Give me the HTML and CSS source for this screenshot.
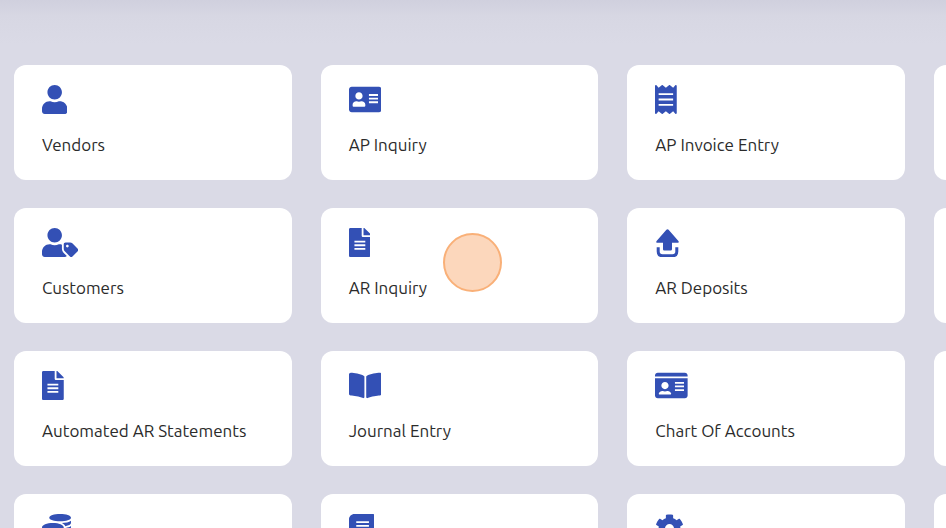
FILE: index.html
```html
<!DOCTYPE html>
<html lang="en">
<head>
    <meta charset="UTF-8">
    <meta name="viewport" content="width=device-width, initial-scale=1.0">
    <title>Accounting</title>
    <link rel="stylesheet" href="styles.css">
</head>
<body>
    <main class="dashboard">
        <div class="card-grid">
            <!-- Payables -->
            <a class="card" href="#vendors">
                <svg class="icon" viewBox="0 0 448 512" aria-hidden="true"><path d="M224 256c70.7 0 128-57.3 128-128S294.7 0 224 0 96 57.3 96 128s57.3 128 128 128zm89.6 32h-16.7c-22.2 10.2-46.9 16-72.9 16s-50.6-5.8-72.9-16h-16.7C60.2 288 0 348.2 0 422.4V464c0 26.5 21.5 48 48 48h352c26.5 0 48-21.5 48-48v-41.6c0-74.2-60.2-134.4-134.4-134.4z"/></svg>
                <span class="label">Vendors</span>
            </a>
            <a class="card" href="#ap-inquiry">
                <svg class="icon" viewBox="0 0 576 512" aria-hidden="true"><path fill-rule="evenodd" d="M528 32H48C21.5 32 0 53.5 0 80v352c0 26.5 21.5 48 48 48h480c26.5 0 48-21.5 48-48V80c0-26.5-21.5-48-48-48zm-352 96c35.3 0 64 28.7 64 64s-28.7 64-64 64-64-28.7-64-64 28.7-64 64-64zm112 236.8c0 10.6-10 19.2-22.4 19.2H86.4C74 384 64 375.4 64 364.8v-19.2c0-31.8 30.1-57.6 67.2-57.6h5c12.3 5.1 25.7 8 39.8 8s27.6-2.9 39.8-8h5c37.1 0 67.2 25.8 67.2 57.6v19.2zM352 160h160v32H352zM352 224h160v32H352zM352 288h160v32H352z"/></svg>
                <span class="label">AP Inquiry</span>
            </a>
            <a class="card" href="#ap-invoice-entry">
                <svg class="icon" viewBox="0 0 384 512" aria-hidden="true"><path fill-rule="evenodd" d="M358.4 3.2L320 48 265.6 3.2a15.9 15.9 0 0 0-19.2 0L192 48 137.6 3.2a15.9 15.9 0 0 0-19.2 0L64 48 25.6 3.2C15-4.7 0 2.8 0 16v480c0 13.2 15 20.7 25.6 12.8L64 464l54.4 44.8a15.9 15.9 0 0 0 19.2 0L192 464l54.4 44.8a15.9 15.9 0 0 0 19.2 0L320 464l38.4 44.8c10.5 7.9 25.6.4 25.6-12.8V16c0-13.2-15-20.7-25.6-12.8zM64 144h256v32H64zM64 240h256v32H64zM64 336h256v32H64z"/></svg>
                <span class="label">AP Invoice Entry</span>
            </a>
            <div class="card"></div>

            <!-- Receivables -->
            <a class="card" href="#customers">
                <svg class="icon" viewBox="0 0 640 512" aria-hidden="true"><path d="M630.6 364.9l-90.3-90.2c-12-12-28.3-18.7-45.3-18.7h-79.3c-17.7 0-32 14.3-32 32v79.2c0 17 6.7 33.2 18.7 45.2l90.3 90.2c12.5 12.5 32.8 12.5 45.3 0l92.5-92.5c12.6-12.5 12.6-32.7.1-45.2zm-182.8-21c-13.3 0-24-10.7-24-24s10.7-24 24-24 24 10.7 24 24c0 13.2-10.7 24-24 24zm-223.8-88c70.7 0 128-57.3 128-128C352 57.3 294.7 0 224 0S96 57.3 96 128c0 70.6 57.3 127.9 128 127.9zm127.8 111.2V294c-12.2-3.6-24.9-6.2-38.2-6.2h-16.7c-22.2 10.2-46.9 16-72.9 16s-50.6-5.8-72.9-16h-16.7C60.2 287.9 0 348.1 0 422.3v41.6c0 26.5 21.5 48 48 48h352c15.5 0 29.1-7.5 37.9-18.9l-58-58c-18.1-18.1-28.1-42.2-28.1-67.9z"/></svg>
                <span class="label">Customers</span>
            </a>
            <a class="card" href="#ar-inquiry">
                <svg class="icon" viewBox="0 0 384 512" aria-hidden="true"><path fill-rule="evenodd" d="M224 136V0H24C10.7 0 0 10.7 0 24v464c0 13.3 10.7 24 24 24h336c13.3 0 24-10.7 24-24V160H248c-13.2 0-24-10.8-24-24zM96 224h192v32H96zM96 288h192v32H96zM96 352h192v32H96zM384 121.9v6.1H256V0h6.1c6.4 0 12.5 2.5 17 7l97.9 98c4.5 4.5 7 10.6 7 16.9z"/></svg>
                <span class="label">AR Inquiry</span>
                <span class="click-marker"></span>
            </a>
            <a class="card" href="#ar-deposits">
                <svg class="icon" viewBox="0 0 25 29" aria-hidden="true"><path d="M12.5 1.2c.4 0 .8.2 1.100.5l9.800 11.200c.8.9.3 1.900-.8 1.900h-5.600v6.200c0 1-.6 1.600-1.600 1.600H9.600c-1 0-1.600-.6-1.600-1.600v-6.200H2.400c-1.100 0-1.600-1-.8-1.900l9.800-11.200c.3-.3.7-.5 1.100-.5z"/><path d="M3.200 19.200v4.300c0 3 1.300 4.300 4.300 4.300h10c3 0 4.300-1.300 4.300-4.300v-4.300" fill="none" stroke="currentColor" stroke-width="3"/></svg>
                <span class="label">AR Deposits</span>
            </a>
            <div class="card"></div>

            <!-- Ledger -->
            <a class="card" href="#automated-ar-statements">
                <svg class="icon" viewBox="0 0 384 512" aria-hidden="true"><path fill-rule="evenodd" d="M224 136V0H24C10.7 0 0 10.7 0 24v464c0 13.3 10.7 24 24 24h336c13.3 0 24-10.7 24-24V160H248c-13.2 0-24-10.8-24-24zM96 224h192v32H96zM96 288h192v32H96zM96 352h192v32H96zM384 121.9v6.1H256V0h6.1c6.4 0 12.5 2.5 17 7l97.9 98c4.5 4.5 7 10.6 7 16.9z"/></svg>
                <span class="label">Automated AR Statements</span>
            </a>
            <a class="card" href="#journal-entry">
                <svg class="icon" viewBox="0 0 576 512" aria-hidden="true"><path d="M542.2 32c-54.8 3.1-163.7 14.4-230.9 55.6-4.7 2.8-7.3 7.9-7.3 13.2v363.9c0 11.5 12.6 18.8 23.3 13.5 69.2-34.9 169.2-44.4 218.7-47 16.9-.9 30-14.4 30-30.6V62.7c0-17.7-15.4-31.7-33.8-30.7zM264.7 87.6C197.5 46.5 88.6 35.2 33.8 32 15.4 31 0 45 0 62.7v337.9c0 16.2 13.1 29.8 30 30.7 49.5 2.6 149.6 12.1 218.8 46.9 10.6 5.4 23.2-1.9 23.2-13.5V100.6c0-5.3-2.6-10.1-7.3-13z"/></svg>
                <span class="label">Journal Entry</span>
            </a>
            <a class="card" href="#chart-of-accounts">
                <svg class="icon" viewBox="0 0 576 512" aria-hidden="true"><path fill-rule="evenodd" d="M528 32H48C21.5 32 0 53.5 0 80v16h576V80c0-26.5-21.5-48-48-48zM0 432c0 26.5 21.5 48 48 48h480c26.5 0 48-21.5 48-48V128H0v304zM176 192c35.3 0 64 28.7 64 64s-28.7 64-64 64-64-28.7-64-64 28.7-64 64-64zM67.1 396.2C75.5 370.5 99.6 352 128 352h8.2c12.3 5.1 25.7 8 39.8 8s27.6-2.9 39.8-8h8.2c28.4 0 52.5 18.5 60.9 44.2 3.2 9.9-5.2 19.8-15.6 19.8H82.7c-10.4 0-18.8-10-15.6-19.8zM352 192h160v32H352zM352 256h160v32H352zM352 320h160v32H352z"/></svg>
                <span class="label">Chart Of Accounts</span>
            </a>
            <div class="card"></div>

            <!-- Setup -->
            <div class="card">
                <svg class="icon" viewBox="0 0 512 512" aria-hidden="true"><path d="M0 405.3V448c0 35.3 86 64 192 64s192-28.7 192-64v-42.7C342.7 434.4 267.2 448 192 448S41.3 434.4 0 405.3zM320 128c106 0 192-28.7 192-64S426 0 320 0 128 28.7 128 64s86 64 192 64zM0 300.4V352c0 35.3 86 64 192 64s192-28.7 192-64v-51.6c-41.3 34-116.9 51.6-192 51.6S41.3 334.4 0 300.4zm416 11c57.3-11.1 96-31.7 96-55.4v-42.7c-23.2 16.4-57.3 27.6-96 34.5v63.6zM192 160C86 160 0 195.8 0 240s86 80 192 80 192-35.8 192-80-86-80-192-80zm219.3 56.3c60-10.8 100.7-32 100.7-56.3v-42.7c-35.5 25.1-96.5 38.6-160.7 41.8 29.5 14.3 51.2 33.5 60 57.2z"/></svg>
            </div>
            <div class="card">
                <svg class="icon" viewBox="0 0 448 512" aria-hidden="true"><path fill-rule="evenodd" d="M448 360V24c0-13.3-10.7-24-24-24H96C43 0 0 43 0 96v320c0 53 43 96 96 96h328c13.3 0 24-10.7 24-24v-16c0-7.5-3.5-14.3-8.9-18.7-4.2-15.4-4.2-59.3 0-74.7 5.4-4.3 8.9-11.1 8.9-18.6zM128 128h224v32H128zM128 192h224v32H128zM96 384h285v64H96c-42 0-42-64 0-64z"/></svg>
            </div>
            <div class="card">
                <svg class="icon" viewBox="0 0 512 512" aria-hidden="true"><path d="M487.4 315.7l-42.6-24.6c4.3-23.2 4.3-47 0-70.2l42.6-24.6c4.9-2.8 7.1-8.6 5.5-14-11.1-35.6-30-67.8-54.7-94.6-3.8-4.1-10-5.1-14.8-2.3L380.8 110c-17.9-15.4-38.5-27.3-60.8-35.1V25.8c0-5.6-3.9-10.5-9.4-11.7-36.7-8.2-74.3-7.8-109.2 0-5.5 1.2-9.4 6.1-9.4 11.7V75c-22.2 7.9-42.8 19.8-60.8 35.1L88.7 85.5c-4.9-2.8-11-1.9-14.8 2.3-24.7 26.7-43.6 58.9-54.7 94.6-1.7 5.4.6 11.2 5.5 14L67.3 221c-4.3 23.2-4.3 47 0 70.2l-42.6 24.6c-4.9 2.8-7.1 8.6-5.5 14 11.1 35.6 30 67.8 54.7 94.6 3.8 4.1 10 5.1 14.8 2.3l42.6-24.6c17.9 15.4 38.5 27.3 60.8 35.1v49.2c0 5.6 3.9 10.5 9.4 11.7 36.7 8.2 74.3 7.8 109.2 0 5.5-1.2 9.4-6.1 9.4-11.7v-49.2c22.2-7.9 42.8-19.8 60.8-35.1l42.6 24.6c4.9 2.8 11 1.9 14.8-2.3 24.7-26.7 43.6-58.9 54.7-94.6 1.5-5.5-.7-11.3-5.6-14.1zM256 336c-44.1 0-80-35.9-80-80s35.9-80 80-80 80 35.9 80 80-35.9 80-80 80z"/></svg>
            </div>
            <div class="card"></div>
        </div>
    </main>
</body>
</html>
```
FILE: styles.css
```css
* {
    margin: 0;
    padding: 0;
    box-sizing: border-box;
}

body {
    font-family: Ubuntu, "Noto Sans", sans-serif;
    font-size: 17px;
    line-height: 24px;
    color: #2b2b2b;
    background: #dadae6;
}

.dashboard {
    height: 100vh;
    padding: 65px 0 0 14px;
    overflow: hidden;
    background: linear-gradient(#d0d0de, #d7d7e3 16px, #dadae6 44px);
}

.card-grid {
    display: grid;
    grid-template-columns: repeat(4, 29.35vw);
    gap: 28px 29px;
}

.card {
    position: relative;
    display: flex;
    flex-direction: column;
    align-items: flex-start;
    gap: 19px;
    min-height: 115px;
    padding: 20px 28px;
    border-radius: 12px;
    background: #fff;
    color: inherit;
    text-decoration: none;
}

.icon {
    height: 29px;
    color: #3350b5;
    fill: currentColor;
}

.click-marker {
    position: absolute;
    top: 25px;
    left: 122px;
    width: 59px;
    height: 59px;
    border: 2px solid #f9b078;
    border-radius: 50%;
    background: #fcd7bc;
}
```
